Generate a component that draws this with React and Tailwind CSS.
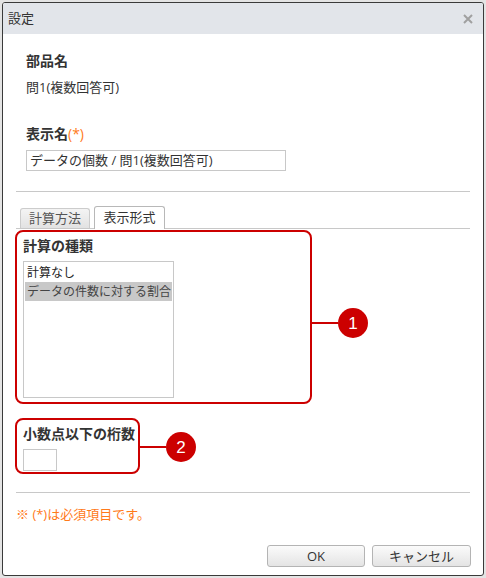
import React from "react";

function Badge({ n }) {
  return (
    <div className="flex items-center">
      <div className="w-[26px] h-[2px] bg-[#cc0000]"></div>
      <div className="w-[30px] h-[30px] rounded-full bg-[#cc0000] text-white flex items-center justify-center text-[17px] leading-none font-['Liberation_Sans',sans-serif]">
        {n}
      </div>
    </div>
  );
}

export default function App() {
  return (
    <div className="w-[486px] h-[578px] bg-[#e4e4e4] p-[2px] font-['Open_Sans','Noto_Sans_CJK_JP',sans-serif] text-[#333]">
      <div className="h-full flex flex-col bg-white border border-[#3a3a3a] rounded-[3px] overflow-hidden">
        {/* タイトルバー */}
        <div className="h-[31px] shrink-0 bg-[#e2e5ea] flex items-center justify-between pl-[5px] pr-[10px]">
          <span className="text-[13px]">設定</span>
          <svg width="10" height="10" viewBox="0 0 10 10">
            <path d="M1 1L9 9M9 1L1 9" stroke="#a0a0a0" strokeWidth="2" />
          </svg>
        </div>

        <div className="flex-1 flex flex-col px-[13px]">
          {/* 部品名 / 表示名 */}
          <div className="pl-[10px] pt-[17px]">
            <div className="text-[14px] font-bold leading-[20px]">部品名</div>
            <div className="text-[13px] leading-[18px] mt-[7px]">問1(複数回答可)</div>
            <div className="text-[14px] font-bold leading-[20px] mt-[28px]">
              表示名<span className="text-[#ff7a1a] font-normal">(*)</span>
            </div>
            <div className="mt-[6px] w-[260px] h-[21px] border border-[#c8c8c8] px-[3px] text-[13px] leading-[19px]">
              データの個数 / 問1(複数回答可)
            </div>
          </div>

          <div className="mt-[20px] h-px bg-[#c8c8c8]"></div>

          {/* タブ */}
          <div className="mt-[14px] flex items-end gap-[4px] pl-[4px] border-b border-[#c8c8c8]">
            <div className="w-[70px] h-[20px] border border-b-0 border-[#cccccc] rounded-t-[3px] bg-gradient-to-b from-[#f4f4f4] to-[#e2e2e2] text-[13px] leading-[19px] text-center text-[#555]">
              計算方法
            </div>
            <div className="w-[71px] h-[23px] -mb-px border border-b-0 border-[#b8b8b8] rounded-t-[3px] bg-white text-[13px] leading-[21px] text-center">
              表示形式
            </div>
          </div>

          {/* 計算の種類 */}
          <div className="mt-[1px] -ml-px flex items-start">
            <div className="w-[297px] h-[174px] border-2 border-[#cc0000] rounded-[8px] px-[6px] pt-[4px] flex flex-col">
              <div className="text-[14px] font-bold leading-[20px]">計算の種類</div>
              <div className="mt-[5px] w-[151px] h-[137px] border border-[#c8c8c8] p-px text-[12px]">
                <div className="h-[19px] leading-[19px] pl-[2px] text-[#222]">計算なし</div>
                <div className="h-[19px] leading-[19px] pl-[2px] bg-[#c8c8c8] text-[#444] whitespace-nowrap">
                  データの件数に対する割合
                </div>
              </div>
            </div>
            <div className="mt-[78px]">
              <Badge n="1" />
            </div>
          </div>

          {/* 小数点以下の桁数 */}
          <div className="mt-[14px] -ml-px flex items-start">
            <div className="w-[125px] h-[56px] border-2 border-[#cc0000] rounded-[8px] px-[6px] pt-[4px]">
              <div className="text-[14px] font-bold leading-[20px] whitespace-nowrap">小数点以下の桁数</div>
              <div className="mt-[5px] w-[34px] h-[22px] border border-[#c8c8c8]"></div>
            </div>
            <div className="mt-[14px]">
              <Badge n="2" />
            </div>
          </div>

          <div className="mt-[18px] h-px bg-[#c8c8c8]"></div>

          <div className="mt-[12px] text-[13px] leading-[18px] text-[#ff7a1a]">※ (*)は必須項目です。</div>

          {/* ボタン */}
          <div className="mt-auto mb-[8px] flex justify-end gap-[7px] -mr-px">
            <button className="w-[98px] h-[22px] border border-[#b4b4b4] rounded-[3px] bg-gradient-to-b from-[#fbfbfb] to-[#e4e4e4] text-[13px] leading-[20px] text-[#333]">
              OK
            </button>
            <button className="w-[99px] h-[22px] border border-[#b4b4b4] rounded-[3px] bg-gradient-to-b from-[#fbfbfb] to-[#e4e4e4] text-[13px] leading-[20px] text-[#333]">
              キャンセル
            </button>
          </div>
        </div>
      </div>
    </div>
  );
}
